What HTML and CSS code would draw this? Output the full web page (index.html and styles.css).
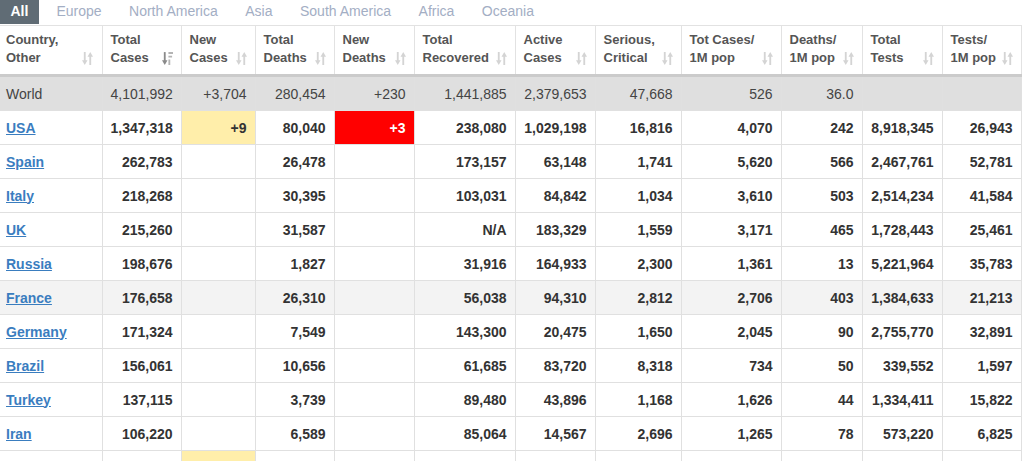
FILE: index.html
```html
<!DOCTYPE html>
<html>
<head>
<meta charset="utf-8">
<link rel="stylesheet" href="styles.css">
</head>
<body>
<div class="tabs">
  <span class="tab active">All</span>
  <span class="tab">Europe</span>
  <span class="tab">North America</span>
  <span class="tab">Asia</span>
  <span class="tab">South America</span>
  <span class="tab">Africa</span>
  <span class="tab">Oceania</span>
</div>
<table class="grid">
  <colgroup>
    <col class="w102"><col class="w79"><col class="w74"><col class="w79"><col class="w80"><col class="w101"><col class="w80"><col class="w86"><col class="w100"><col class="w81"><col class="w80"><col class="w79">
  </colgroup>
  <thead>
    <tr>
      <th class="first"><div class="hd"><span>Country,<br>Other</span><svg class="sort" viewBox="0 0 12 14"><path d="M3 0v10M9 4v10" stroke="#d4d4d4" stroke-width="2"/><path d="M0 9h6l-3 5zM6 5h6L9 0z" fill="#d4d4d4"/></svg></div></th>
      <th><div class="hd"><span>Total<br>Cases</span><svg class="sort" viewBox="0 0 12 14"><path d="M3 0v10" stroke="#8a8a8a" stroke-width="2"/><path d="M0 9h6l-3 5z" fill="#8a8a8a"/><path d="M7 0h5v2H7zM7 4h4v2H7zM7 8h2v6H7z" fill="#b4b4b4"/></svg></div></th>
      <th><div class="hd"><span>New<br>Cases</span><svg class="sort" viewBox="0 0 12 14"><path d="M3 0v10M9 4v10" stroke="#d4d4d4" stroke-width="2"/><path d="M0 9h6l-3 5zM6 5h6L9 0z" fill="#d4d4d4"/></svg></div></th>
      <th><div class="hd"><span>Total<br>Deaths</span><svg class="sort" viewBox="0 0 12 14"><path d="M3 0v10M9 4v10" stroke="#d4d4d4" stroke-width="2"/><path d="M0 9h6l-3 5zM6 5h6L9 0z" fill="#d4d4d4"/></svg></div></th>
      <th><div class="hd"><span>New<br>Deaths</span><svg class="sort" viewBox="0 0 12 14"><path d="M3 0v10M9 4v10" stroke="#d4d4d4" stroke-width="2"/><path d="M0 9h6l-3 5zM6 5h6L9 0z" fill="#d4d4d4"/></svg></div></th>
      <th><div class="hd"><span>Total<br>Recovered</span><svg class="sort" viewBox="0 0 12 14"><path d="M3 0v10M9 4v10" stroke="#d4d4d4" stroke-width="2"/><path d="M0 9h6l-3 5zM6 5h6L9 0z" fill="#d4d4d4"/></svg></div></th>
      <th><div class="hd"><span>Active<br>Cases</span><svg class="sort" viewBox="0 0 12 14"><path d="M3 0v10M9 4v10" stroke="#d4d4d4" stroke-width="2"/><path d="M0 9h6l-3 5zM6 5h6L9 0z" fill="#d4d4d4"/></svg></div></th>
      <th><div class="hd"><span>Serious,<br>Critical</span><svg class="sort" viewBox="0 0 12 14"><path d="M3 0v10M9 4v10" stroke="#d4d4d4" stroke-width="2"/><path d="M0 9h6l-3 5zM6 5h6L9 0z" fill="#d4d4d4"/></svg></div></th>
      <th><div class="hd"><span>Tot&nbsp;Cases/<br>1M pop</span><svg class="sort" viewBox="0 0 12 14"><path d="M3 0v10M9 4v10" stroke="#d4d4d4" stroke-width="2"/><path d="M0 9h6l-3 5zM6 5h6L9 0z" fill="#d4d4d4"/></svg></div></th>
      <th><div class="hd"><span>Deaths/<br>1M pop</span><svg class="sort" viewBox="0 0 12 14"><path d="M3 0v10M9 4v10" stroke="#d4d4d4" stroke-width="2"/><path d="M0 9h6l-3 5zM6 5h6L9 0z" fill="#d4d4d4"/></svg></div></th>
      <th><div class="hd"><span>Total<br>Tests</span><svg class="sort" viewBox="0 0 12 14"><path d="M3 0v10M9 4v10" stroke="#d4d4d4" stroke-width="2"/><path d="M0 9h6l-3 5zM6 5h6L9 0z" fill="#d4d4d4"/></svg></div></th>
      <th><div class="hd"><span>Tests/<br>1M pop</span><svg class="sort" viewBox="0 0 12 14"><path d="M3 0v10M9 4v10" stroke="#d4d4d4" stroke-width="2"/><path d="M0 9h6l-3 5zM6 5h6L9 0z" fill="#d4d4d4"/></svg></div></th>
    </tr>
  </thead>
  <tbody>
    <tr class="world">
      <td class="first">World</td><td>4,101,992</td><td>+3,704</td><td>280,454</td><td>+230</td><td>1,441,885</td><td>2,379,653</td><td>47,668</td><td>526</td><td>36.0</td><td></td><td></td>
    </tr>
    <tr>
      <td class="first"><a href="#">USA</a></td><td>1,347,318</td><td class="newcase">+9</td><td>80,040</td><td class="newdeath">+3</td><td>238,080</td><td>1,029,198</td><td>16,816</td><td>4,070</td><td>242</td><td>8,918,345</td><td>26,943</td>
    </tr>
    <tr>
      <td class="first"><a href="#">Spain</a></td><td>262,783</td><td></td><td>26,478</td><td></td><td>173,157</td><td>63,148</td><td>1,741</td><td>5,620</td><td>566</td><td>2,467,761</td><td>52,781</td>
    </tr>
    <tr>
      <td class="first"><a href="#">Italy</a></td><td>218,268</td><td></td><td>30,395</td><td></td><td>103,031</td><td>84,842</td><td>1,034</td><td>3,610</td><td>503</td><td>2,514,234</td><td>41,584</td>
    </tr>
    <tr>
      <td class="first"><a href="#">UK</a></td><td>215,260</td><td></td><td>31,587</td><td></td><td>N/A</td><td>183,329</td><td>1,559</td><td>3,171</td><td>465</td><td>1,728,443</td><td>25,461</td>
    </tr>
    <tr>
      <td class="first"><a href="#">Russia</a></td><td>198,676</td><td></td><td>1,827</td><td></td><td>31,916</td><td>164,933</td><td>2,300</td><td>1,361</td><td>13</td><td>5,221,964</td><td>35,783</td>
    </tr>
    <tr class="hover">
      <td class="first"><a href="#">France</a></td><td>176,658</td><td></td><td>26,310</td><td></td><td>56,038</td><td>94,310</td><td>2,812</td><td>2,706</td><td>403</td><td>1,384,633</td><td>21,213</td>
    </tr>
    <tr>
      <td class="first"><a href="#">Germany</a></td><td>171,324</td><td></td><td>7,549</td><td></td><td>143,300</td><td>20,475</td><td>1,650</td><td>2,045</td><td>90</td><td>2,755,770</td><td>32,891</td>
    </tr>
    <tr>
      <td class="first"><a href="#">Brazil</a></td><td>156,061</td><td></td><td>10,656</td><td></td><td>61,685</td><td>83,720</td><td>8,318</td><td>734</td><td>50</td><td>339,552</td><td>1,597</td>
    </tr>
    <tr>
      <td class="first"><a href="#">Turkey</a></td><td>137,115</td><td></td><td>3,739</td><td></td><td>89,480</td><td>43,896</td><td>1,168</td><td>1,626</td><td>44</td><td>1,334,411</td><td>15,822</td>
    </tr>
    <tr>
      <td class="first"><a href="#">Iran</a></td><td>106,220</td><td></td><td>6,589</td><td></td><td>85,064</td><td>14,567</td><td>2,696</td><td>1,265</td><td>78</td><td>573,220</td><td>6,825</td>
    </tr>
    <tr>
      <td class="first"></td><td></td><td class="newcase"></td><td></td><td></td><td></td><td></td><td></td><td></td><td></td><td></td><td></td>
    </tr>
  </tbody>
</table>
</body>
</html>
```

FILE: styles.css
```css
html, body {
  margin: 0;
  padding: 0;
  background: #fff;
  font-family: "Liberation Sans", Arial, sans-serif;
  overflow: hidden;
}

.tabs {
  display: flex;
  height: 25px;
  gap: 6.5px;
  font-size: 14px;
  line-height: 23px;
}

.tab {
  padding: 0 10.5px;
  color: #a3aec4;
}

.tab.active {
  background: #606c75;
  color: #fff;
  font-weight: bold;
  padding: 0 11px 0 10.5px;
  height: 24px;
}

.grid {
  border-collapse: collapse;
  table-layout: fixed;
  width: 1021px;
  color: #333;
}

.w102 { width: 102px; }
.w101 { width: 101px; }
.w80 { width: 80px; }
.w74 { width: 74px; }
.w79 { width: 79px; }
.w86 { width: 86px; }
.w100 { width: 100px; }
.w81 { width: 81px; }

.grid th {
  border: 1px solid #e2e2e2;
  border-bottom: 3px solid #cbcbcb;
  padding: 5px 8px 7px 8px;
  text-align: left;
  vertical-align: top;
  font-size: 13px;
  line-height: 18px;
  font-weight: bold;
  color: #555;
  height: 36px;
}

.grid th.first {
  padding-left: 6px;
  padding-right: 9px;
  border-left: none;
}

.hd {
  display: flex;
  justify-content: space-between;
  align-items: flex-end;
  white-space: nowrap;
}

.sort {
  width: 11px;
  height: 13px;
  flex: none;
  margin-bottom: 2px;
}

.grid td {
  border: 1px solid #e0e0e0;
  height: 33px;
  padding: 0 8px;
  text-align: right;
  font-size: 14px;
  font-weight: bold;
  white-space: nowrap;
}

.grid td.first {
  text-align: left;
  padding-left: 6px;
  border-left: none;
}

.grid td a {
  color: #3a7dbf;
  text-decoration: underline;
}

.world td {
  background: #dfdfdf;
  font-weight: normal;
  color: #444;
}

.hover td {
  background: #f3f3f3;
}

.grid td.newcase {
  background: #ffeeaa;
}

.grid td.newdeath {
  background: #ff0000;
  color: #fff;
}
```
